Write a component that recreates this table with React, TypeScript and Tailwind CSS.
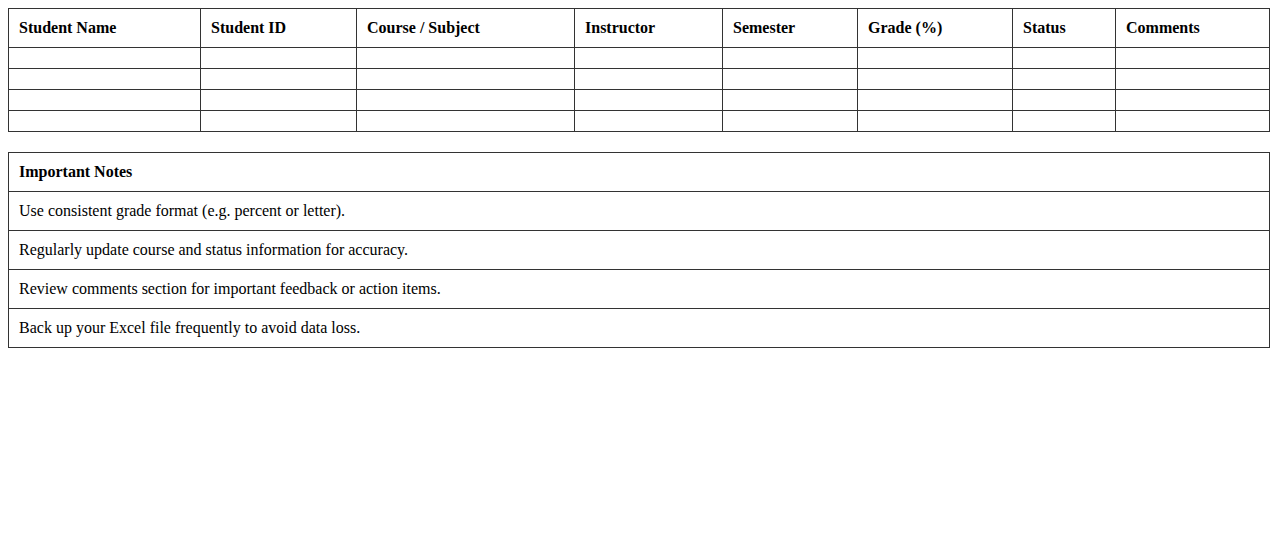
const headers = [
  { label: "Student Name", w: "w-[192px]" },
  { label: "Student ID", w: "w-[156px]" },
  { label: "Course / Subject", w: "w-[218px]" },
  { label: "Instructor", w: "w-[148px]" },
  { label: "Semester", w: "w-[135px]" },
  { label: "Grade (%)", w: "w-[155px]" },
  { label: "Status", w: "w-[103px]" },
  { label: "Comments", w: "" },
];

const notes = [
  "Use consistent grade format (e.g. percent or letter).",
  "Regularly update course and status information for accuracy.",
  "Review comments section for important feedback or action items.",
  "Back up your Excel file frequently to avoid data loss.",
];

export default function App() {
  return (
    <div className="p-2 bg-white text-black font-['Liberation_Serif','Times_New_Roman',serif] text-[16px] leading-[18px]">
      <table className="w-full border-collapse border border-[#333] mb-5">
        <thead>
          <tr>
            {headers.map((h) => (
              <th key={h.label} className={`${h.w} border border-[#333] p-[10px] text-left font-bold`}>
                {h.label}
              </th>
            ))}
          </tr>
        </thead>
        <tbody>
          {[0, 1, 2, 3].map((r) => (
            <tr key={r}>
              {headers.map((h) => (
                <td key={h.label} className="border border-[#333] p-[10px]"></td>
              ))}
            </tr>
          ))}
        </tbody>
      </table>

      <table className="w-full border-collapse border border-[#333]">
        <thead>
          <tr>
            <th className="border border-[#333] p-[10px] text-left font-bold">Important Notes</th>
          </tr>
        </thead>
        <tbody>
          {notes.map((n) => (
            <tr key={n}>
              <td className="border border-[#333] p-[10px]">{n}</td>
            </tr>
          ))}
        </tbody>
      </table>
    </div>
  );
}
